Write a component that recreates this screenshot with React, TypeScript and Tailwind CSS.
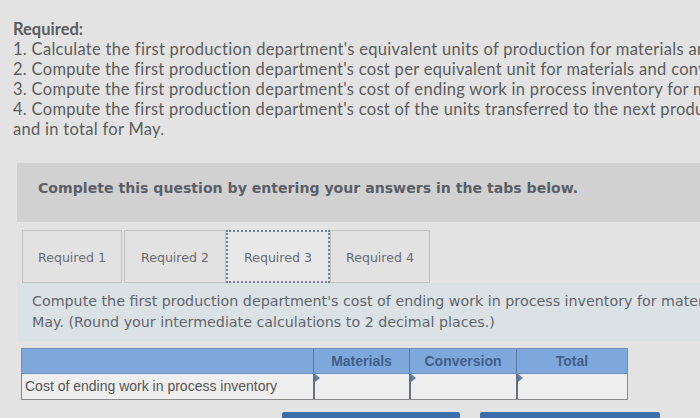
export default function App() {
  const tabs = ['Required 1', 'Required 2', 'Required 3', 'Required 4'];

  return (
    <div className="w-[700px] h-[418px] overflow-hidden bg-[#e3e3e3] relative">
      {/* Required list */}
      <div className="pl-[13px] pt-[19px] whitespace-nowrap text-[#5c5c5c] text-[16.5px] tracking-[0.3px] leading-[20px] font-['Lato',sans-serif]">
        <p className="font-bold tracking-normal">Required:</p>
        <p>1. Calculate the first production department's equivalent units of production for materials and conversion for May.</p>
        <p>2. Compute the first production department's cost per equivalent unit for materials and conversion for May.</p>
        <p>3. Compute the first production department's cost of ending work in process inventory for materials, conversion, and in total for May.</p>
        <p>4. Compute the first production department's cost of the units transferred to the next production department for materials, conversion,</p>
        <p>and in total for May.</p>
      </div>

      {/* Instruction band */}
      <div className="ml-[17px] mt-[24px] h-[59px] bg-[#d1d1d1] flex items-center pl-[21px] pb-[7px] whitespace-nowrap">
        <p className="font-['DejaVu_Sans',sans-serif] font-bold text-[14.1px] text-[#5b5e66]">
          Complete this question by entering your answers in the tabs below.
        </p>
      </div>

      {/* Tabs */}
      <div className="flex ml-[22px] mt-[8px] h-[53px] items-stretch font-['DejaVu_Sans',sans-serif] text-[12.6px] text-[#6a6c72]">
        {tabs.map((t, i) => (
          <div
            key={t}
            className={
              i === 2
                ? 'w-[104px] flex items-center justify-center pt-[3px] border-[2px] border-dotted border-[#6c7d95] bg-[#e8e8e8]'
                : i === 1
                ? 'w-[102px] ml-[2px] flex items-center justify-center pt-[3px] border border-[#c2c2c2] bg-[#e2e2e2]'
                : 'w-[100px] flex items-center justify-center pt-[3px] border border-[#c2c2c2] bg-[#e2e2e2]'
            }
          >
            {t}
          </div>
        ))}
      </div>

      {/* Question panel */}
      <div className="ml-[17px] h-[58px] bg-[#dbe2e6] pl-[15px] pt-[8px] whitespace-nowrap font-['DejaVu_Sans',sans-serif] text-[14.25px] leading-[21px] text-[#62656c]">
        <p>Compute the first production department's cost of ending work in process inventory for materials, conversion, and in total for</p>
        <p>May. (Round your intermediate calculations to 2 decimal places.)</p>
      </div>

      {/* Answer table */}
      <div className="ml-[21px] mt-[7px] w-[607px] font-['Liberation_Sans',sans-serif]">
        <div className="flex h-[26px] bg-[#7ea8dc] border border-[#6f8fb8]">
          <div className="w-[291px]" />
          <div className="w-[96px] border-l border-[#5a7aa3] flex items-center justify-center font-bold text-[14px] text-[#3e5f8c]">Materials</div>
          <div className="w-[107px] border-l border-[#5a7aa3] flex items-center justify-center font-bold text-[14px] text-[#3e5f8c]">Conversion</div>
          <div className="flex-1 border-l border-[#5a7aa3] flex items-center justify-center font-bold text-[14px] text-[#3e5f8c]">Total</div>
        </div>
        <div className="flex h-[26px] bg-[#eeeeee] border border-t-0 border-[#8a8a8a]">
          <div className="w-[291px] flex items-center pl-[3px] text-[14px] text-[#555]">Cost of ending work in process inventory</div>
          {['w-[96px]', 'w-[107px]', 'flex-1'].map((w, i) => (
            <div key={i} className={`${w} relative border-l-2 border-[#6b6f76]`}>
              <div className="absolute left-0 top-0 w-0 h-0 border-t-[4px] border-b-[4px] border-l-[5px] border-t-transparent border-b-transparent border-l-[#5a7fb0]" />
            </div>
          ))}
        </div>
      </div>

      {/* Buttons (cut off) */}
      <div className="flex ml-[282px] mt-[12px] gap-[20px]">
        <div className="w-[178px] h-[14px] bg-[#3c6ea9] rounded-t-[2px]" />
        <div className="w-[180px] h-[14px] bg-[#3c6ea9] rounded-t-[2px]" />
      </div>
    </div>
  );
}
